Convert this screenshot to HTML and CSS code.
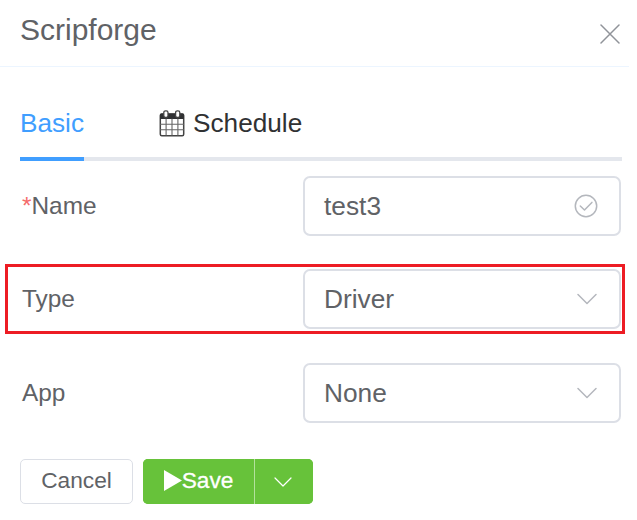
FILE: index.html
```
<!DOCTYPE html>
<html lang="en">
<head>
<meta charset="utf-8">
<title>Scripforge</title>
<link rel="stylesheet" href="styles.css">
</head>
<body>
<header class="header">
  <h1 class="title">Scripforge</h1>
  <svg class="close" viewBox="0 0 20 20"><path d="M1 1L19 19M19 1L1 19"/></svg>
</header>
<nav class="tabs">
  <div class="tab active">Basic</div>
  <div class="tab">
    <svg class="calendar" viewBox="0 0 26 27">
      <rect x="1.300" y="4" width="23.400" height="21.800" rx="1.500" fill="#fff" stroke="#444" stroke-width="1.500"/>
      <path d="M1 9V5q0-1.500 1.500-1.500h21Q25 3.500 25 5v4z" fill="#303133"/>
      <path d="M7.100 9v16M13 9v16M18.900 9v16M1.500 14.300h23M1.500 19.700h23" stroke="#666" stroke-width="1.100"/>
      <rect x="4.800" y="0.800" width="4.200" height="6.700" rx="1.800" fill="#fff" stroke="#444" stroke-width="1.300"/>
      <rect x="16.600" y="0.800" width="4.200" height="6.700" rx="1.800" fill="#fff" stroke="#444" stroke-width="1.300"/>
    </svg>
    <span>Schedule</span>
  </div>
</nav>
<main class="form">
  <div class="row">
    <label class="label"><span class="required">*</span>Name</label>
    <div class="field"><span>test3</span>
      <svg class="check" viewBox="0 0 24 24"><circle cx="12" cy="12" r="10.700"/><path d="M6.300 12l4.200 4 7.400-7.600"/></svg>
    </div>
  </div>
  <div class="row highlighted">
    <label class="label">Type</label>
    <div class="field"><span>Driver</span>
      <svg class="chevron" viewBox="0 0 20 12"><path d="M1 1.500l9 9 9-9"/></svg>
    </div>
  </div>
  <div class="row">
    <label class="label">App</label>
    <div class="field"><span>None</span>
      <svg class="chevron" viewBox="0 0 20 12"><path d="M1 1.500l9 9 9-9"/></svg>
    </div>
  </div>
</main>
<footer class="actions">
  <button class="cancel">Cancel</button>
  <div class="split">
    <button class="save"><svg class="play" viewBox="0 0 18 21"><path d="M0 0l18 10.500L0 21z"/></svg><span>Save</span></button>
    <button class="more"><svg class="arrow" viewBox="0 0 18 10"><path d="M1 1l8 8 8-8"/></svg></button>
  </div>
</footer>
</body>
</html>
```
FILE: styles.css
```
* { box-sizing: border-box; }
body {
  margin: 0;
  height: 520px;
  overflow: hidden;
  background: #fff;
  color: #606266;
  font-family: "Liberation Sans", Arial, sans-serif;
}
svg { display: block; flex: none; }
path, circle { stroke-linecap: round; stroke-linejoin: round; }
.header {
  display: flex;
  justify-content: space-between;
  width: 629px;
  height: 67px;
  padding: 0 9px 0 20px;
  border-bottom: 1px solid #ecf5ff;
}
.title { margin: 13px 0 0; font-size: 30px; line-height: 34px; font-weight: 400; }
.close { width: 20px; height: 20px; margin-top: 24px; fill: none; stroke: #909399; stroke-width: 1.5; }
.tabs {
  display: flex;
  gap: 75px;
  width: 602px;
  height: 94px;
  margin-left: 20px;
  border-bottom: 4px solid #e4e7ed;
}
.tab {
  display: flex;
  height: 94px;
  padding-top: 41px;
  color: #303133;
  font-size: 26.2px;
  line-height: 30px;
}
.active { color: #409eff; border-bottom: 4px solid #409eff; }
.calendar { width: 26px; height: 27px; margin: 2px 8px 0 0; }
.form { padding: 10px 12px 0 5px; }
.row {
  display: flex;
  align-items: center;
  height: 70px;
  margin-bottom: 23px;
  padding: 0 1px 0 14px;
  border: 3px solid transparent;
}
.highlighted { border-color: #ed1c24; margin-bottom: 24px; }
.label { width: 281px; font-size: 24.4px; line-height: 28px; }
.required { color: #f56c6c; }
.field {
  display: flex;
  align-items: center;
  justify-content: space-between;
  width: 318px;
  flex: none;
  height: 60px;
  margin-left: auto;
  padding: 0 22px 0 19px;
  border: 2px solid #dcdfe6;
  border-radius: 7px;
  background: #fff;
  font-size: 26.3px;
  line-height: 30px;
}
.check, .chevron { fill: none; stroke: #b4b7bd; stroke-width: 1.5; }
.check { width: 24px; height: 24px; margin-right: -1px; }
.chevron { width: 20px; height: 12px; }
.actions { display: flex; gap: 10px; padding-left: 20px; margin-top: 31px; }
button {
  display: flex;
  align-items: center;
  justify-content: center;
  height: 45px;
  margin: 0;
  padding: 0 0 3px;
  font: 22.7px/26px "Liberation Sans", Arial, sans-serif;
}
.cancel { width: 113px; border: 1px solid #dcdfe6; border-radius: 5px; background: #fff; color: #606266; }
.split { display: flex; width: 170px; border-radius: 5px; overflow: hidden; background: #67c23a; }
.save { width: 112px; border: 0; border-right: 1px solid #b3e19d; background: #67c23a; color: #fff; }
.save span { -webkit-text-stroke: 0.3px #fff; }
.more { width: 58px; padding: 0 2px 0 0; border: 0; background: #67c23a; }
.play { width: 18px; height: 21px; fill: #fff; }
.arrow { width: 18px; height: 10px; fill: none; stroke: #fff; stroke-width: 1.2; }
```
